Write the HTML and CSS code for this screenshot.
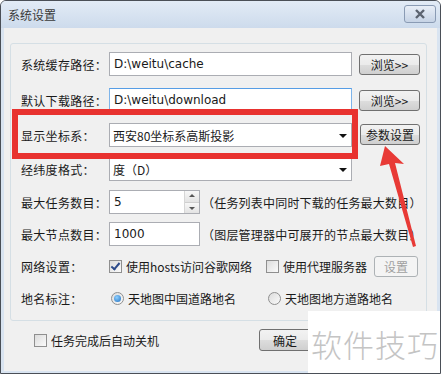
FILE: index.html
```html
<!DOCTYPE html>
<html lang="zh-CN">
<head>
    <meta charset="UTF-8">
    <title>系统设置</title>
    <link rel="stylesheet" href="styles.css">
</head>
<body>

    <div class="window">
        <div class="titlebar">
            <span class="title">系统设置</span>
            <span class="close">
                <svg width="14" height="10" viewBox="0 0 14 10"><path d="M3 1 L11 9 M11 1 L3 9" stroke="#5c6470" stroke-width="2.4" fill="none"/></svg>
            </span>
        </div>

        <div class="client">
            <div class="group">
                <div class="row r1">
                    <span class="label">系统缓存路径：</span>
                    <div class="field wide">D:\weitu\cache</div>
                    <button class="btn browse">浏览&gt;&gt;</button>
                </div>
                <div class="row r2">
                    <span class="label">默认下载路径：</span>
                    <div class="field wide focus">D:\weitu\download</div>
                    <button class="btn browse">浏览&gt;&gt;</button>
                </div>
                <div class="row r3">
                    <span class="label">显示坐标系：</span>
                    <div class="field wide select">西安80坐标系高斯投影<span class="caret"></span></div>
                    <button class="btn param">参数设置</button>
                </div>
                <div class="row r4">
                    <span class="label">经纬度格式：</span>
                    <div class="field wide select">度（D）<span class="caret"></span></div>
                </div>
                <div class="row r5">
                    <span class="label">最大任务数目：</span>
                    <div class="field short spin">5
                        <span class="spinbtns"><span class="up"></span><span class="down"></span></span>
                    </div>
                    <span class="note">（任务列表中同时下载的任务最大数目）</span>
                </div>
                <div class="row r6">
                    <span class="label">最大节点数目：</span>
                    <div class="field short">1000</div>
                    <span class="note">（图层管理器中可展开的节点最大数目）</span>
                </div>
                <div class="row r7">
                    <span class="label">网络设置：</span>
                    <label class="opt first"><span class="check on"></span>使用hosts访问谷歌网络</label>
                    <label class="opt"><span class="check"></span>使用代理服务器</label>
                    <button class="btn small" disabled>设置</button>
                </div>
                <div class="row r8">
                    <span class="label">地名标注：</span>
                    <label class="opt first"><span class="radio on"></span>天地图中国道路地名</label>
                    <label class="opt"><span class="radio"></span>天地图地方道路地名</label>
                </div>
            </div>

            <div class="footer">
                <label class="opt shutdown"><span class="check"></span>任务完成后自动关机</label>
                <button class="btn ok">确定</button>
            </div>
        </div>

        <!-- annotation overlays -->
        <div class="highlight"></div>
        <svg class="arrow" width="60" height="110" viewBox="0 0 60 110">
            <path d="M23 0 L42 18 L33 17 L54 100 L51 101 L27 18 L18 20 Z" fill="#e83a36"/>
        </svg>
        <div class="watermark">软件技巧</div>
    </div>

</body>
</html>
```

FILE: styles.css
```css
body {
    margin: 0;
    padding: 0;
    font-family: "Noto Sans CJK SC", "DejaVu Sans", sans-serif;
    font-size: 12px;
    color: #1a1a1a;
}

.window {
    position: relative;
    width: 441px;
    height: 374px;
    box-sizing: border-box;
    border: 1px solid #4a4f57;
    border-radius: 6px 6px 0 0;
    background: #d9e4f1;
    overflow: hidden;
}

.titlebar {
    height: 27px;
    display: flex;
    align-items: center;
    justify-content: space-between;
    padding: 0 4px 0 7px;
    background: linear-gradient(#e2ebf6, #cddbec);
}

.title {
    font-size: 12px;
    color: #3a3a3a;
}

.close {
    width: 30px;
    height: 16px;
    margin-top: -1px;
    display: flex;
    align-items: center;
    justify-content: center;
    border: 1px solid #8a9bb4;
    border-radius: 3px;
    background: linear-gradient(#e8eef7, #c6d3e5);
}

.client {
    margin: 0 3px;
    height: 343px;
    background: #f0f0f0;
    padding: 15px 0 0 6px;
    box-sizing: border-box;
}

.group {
    width: 417px;
    border: 1px solid #d5dfe5;
    border-radius: 3px;
    padding: 2px 0 6px 10px;
    box-sizing: border-box;
}

.row {
    display: flex;
    align-items: center;
}

.r1, .r2 { height: 36px; }
.r3, .r4 { height: 34px; }
.r5, .r6, .r7, .r8 { height: 32px; }

.label {
    width: 88px;
    flex: none;
    letter-spacing: 0.3px;
}

.field {
    height: 24px;
    box-sizing: border-box;
    border: 1px solid #abadb3;
    background: #fff;
    display: flex;
    align-items: center;
    padding-left: 4px;
    position: relative;
    font-family: "DejaVu Sans", "Noto Sans CJK SC", sans-serif;
}

.field.focus {
    border-color: #7eb4ea;
    border-top-color: #569de5;
}

.wide { width: 243px; }
.short { width: 91px; }

.select {
    font-family: "Noto Sans CJK SC", sans-serif;
    padding-left: 3px;
}

.caret {
    position: absolute;
    right: 4px;
    top: 10px;
    border-left: 4px solid transparent;
    border-right: 4px solid transparent;
    border-top: 4px solid #111;
}

.spinbtns {
    position: absolute;
    right: 0;
    top: 0;
    bottom: 0;
    width: 14px;
    display: flex;
    flex-direction: column;
    border-left: 1px solid #d6d6d6;
}

.spinbtns span {
    flex: 1;
    position: relative;
    background: linear-gradient(#f7f7f7, #e3e3e3);
}

.spinbtns .up { border-bottom: 1px solid #cfcfcf; }

.spinbtns .up::after, .spinbtns .down::after {
    content: "";
    position: absolute;
    left: 4px;
    border-left: 3px solid transparent;
    border-right: 3px solid transparent;
}

.spinbtns .up::after { top: 3px; border-bottom: 3px solid #555; }
.spinbtns .down::after { top: 4px; border-top: 3px solid #555; }

.note {
    margin-left: 2px;
    white-space: nowrap;
    letter-spacing: 0.2px;
}

.btn {
    font-family: "Noto Sans CJK SC", sans-serif;
    font-size: 12px;
    height: 21px;
    padding: 0;
    border: 1px solid #707070;
    border-radius: 3px;
    background: linear-gradient(#f2f2f2 0%, #ebebeb 50%, #dddddd 51%, #cfcfcf 100%);
    color: #1a1a1a;
}

.browse {
    width: 61px;
    margin-left: 7px;
}

.param {
    width: 60px;
    margin-left: 8px;
    margin-top: -2px;
}

.small {
    width: 44px;
    margin-left: auto;
    margin-right: 8px;
    border-color: #adb2b5;
    background: #f4f4f4;
    color: #a0a0a0;
}

.opt {
    display: flex;
    align-items: center;
    white-space: nowrap;
}

.opt.first { width: 157px; }

.check {
    width: 11px;
    height: 11px;
    border: 1px solid #8f8f8f;
    background: linear-gradient(135deg, #dcdcdc, #fafafa);
    margin-right: 4px;
    position: relative;
}

.check.on::after {
    content: "";
    position: absolute;
    left: 3px;
    top: 0;
    width: 3px;
    height: 7px;
    border: solid #2c4a8a;
    border-width: 0 2px 2px 0;
    transform: rotate(40deg);
}

.radio {
    width: 11px;
    height: 11px;
    border: 1px solid #8f8f8f;
    border-radius: 50%;
    background: linear-gradient(135deg, #dcdcdc, #fafafa);
    margin: 0 4px 0 2px;
    position: relative;
}

.radio.on::after {
    content: "";
    position: absolute;
    left: 2px;
    top: 2px;
    width: 7px;
    height: 7px;
    border-radius: 50%;
    background: radial-gradient(circle at 40% 35%, #8fd0ff, #1f6fc0);
}

.footer {
    display: flex;
    align-items: center;
    height: 38px;
    padding-left: 24px;
}

.shutdown { width: 225px; }

.ok {
    width: 52px;
    height: 22px;
}

.highlight {
    position: absolute;
    left: 11px;
    top: 108px;
    width: 346px;
    height: 50px;
    box-sizing: border-box;
    border: 6px solid #e8322f;
}

.arrow {
    position: absolute;
    left: 361px;
    top: 145px;
}

.watermark {
    position: absolute;
    left: 307px;
    top: 310px;
    width: 134px;
    height: 64px;
    background: #fff;
    color: #c4c4c4;
    font-size: 31px;
    font-weight: 300;
    display: flex;
    align-items: center;
    justify-content: center;
    letter-spacing: 1px;
}
```
